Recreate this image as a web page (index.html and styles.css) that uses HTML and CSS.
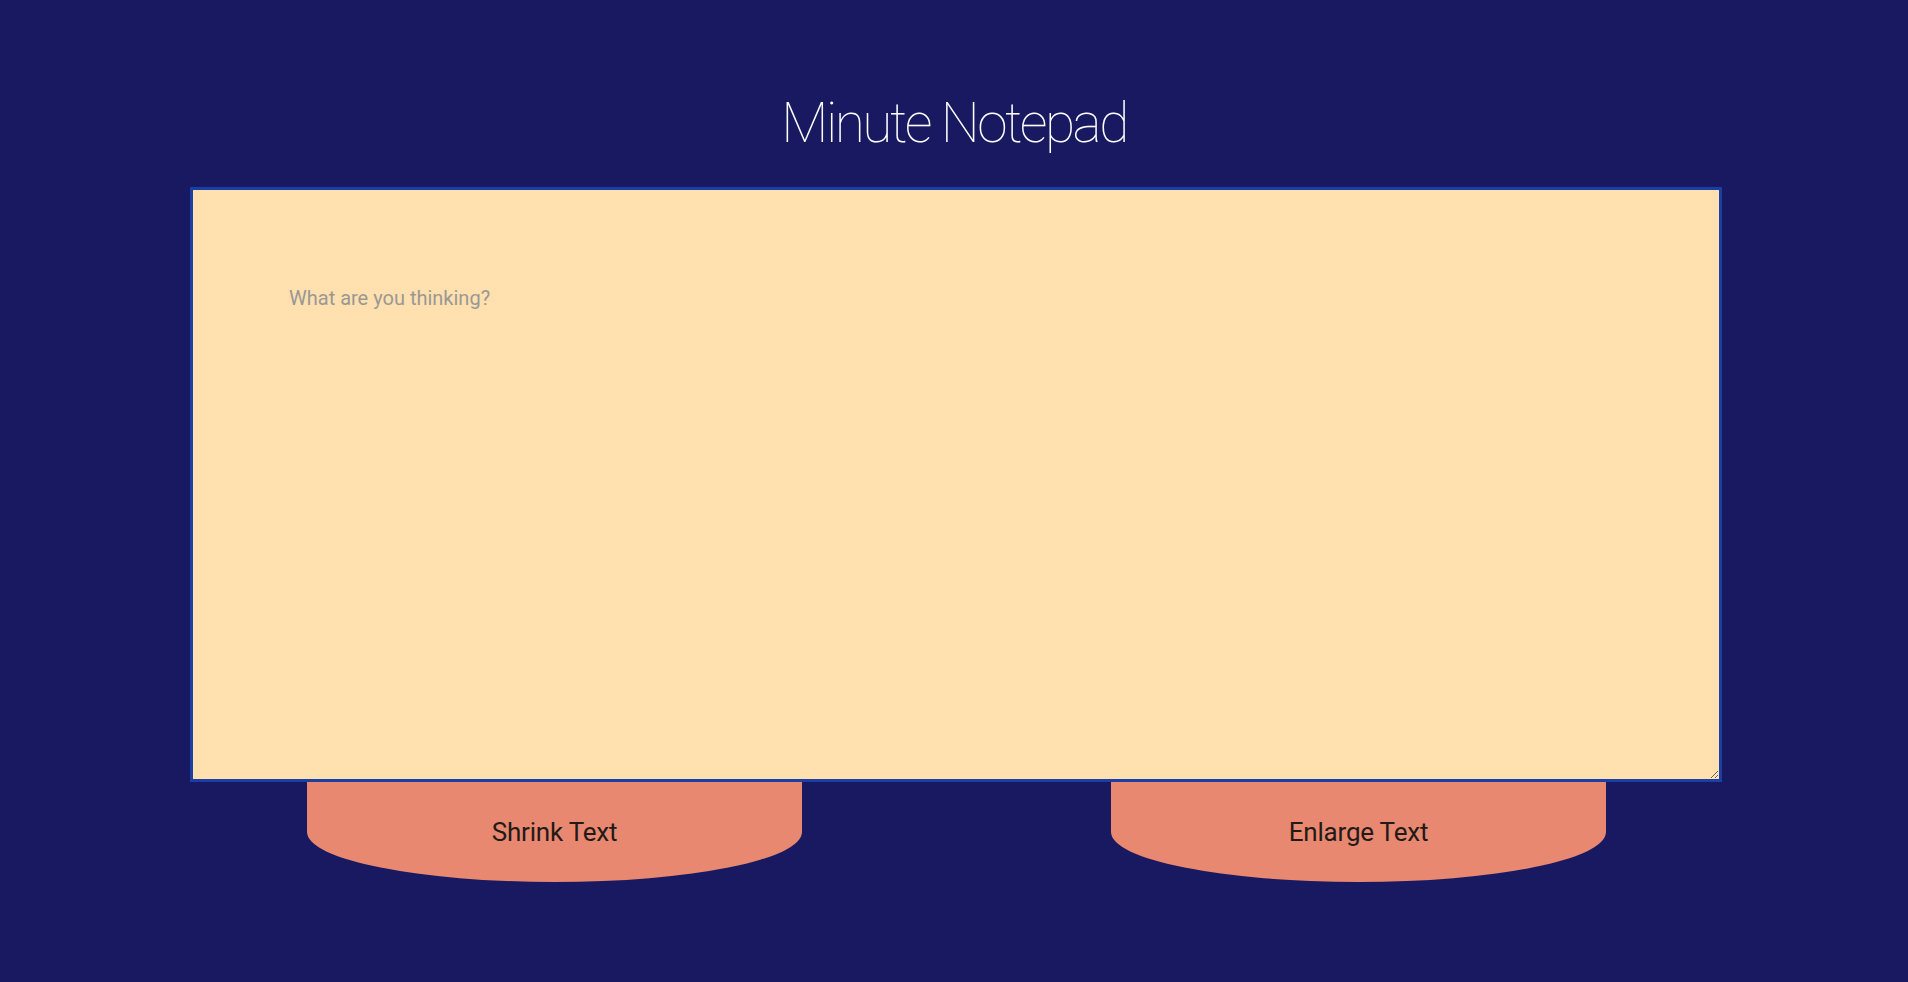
FILE: index.html
```html
<!DOCTYPE html>
<html lang="en">
<head>
<meta charset="utf-8">
<title>Minute Notepad</title>
<link rel="stylesheet" href="styles.css">
</head>
<body>
<main class="page">
  <h1 class="title">Minute Notepad</h1>
  <textarea class="pad" placeholder="What are you thinking?" autofocus></textarea>
  <div class="controls">
    <button class="btn" type="button">Shrink Text</button>
    <button class="btn" type="button">Enlarge Text</button>
  </div>
</main>
</body>
</html>
```
FILE: styles.css
```css
html, body {
  margin: 0;
  padding: 0;
  background: #191962;
}
.page {
  display: flex;
  flex-direction: column;
  min-height: 982px;
}
.title {
  margin: 96px 0 36px;
  font-family: Roboto, "Liberation Sans", sans-serif;
  font-weight: 100;
  font-size: 55px;
  line-height: 55px;
  letter-spacing: -2.5px;
  color: #ffffff;
  text-align: center;
}
.pad {
  display: block;
  box-sizing: border-box;
  width: 1532px;
  height: 595px;
  margin: 0 0 0 190px;
  padding: 96px;
  border: 3px solid #1b3fa6;
  outline: none;
  background: #ffe0ae;
  font-family: Roboto, "Liberation Sans", sans-serif;
  font-size: 20px;
  line-height: 24px;
  color: #222;
  caret-color: #000;
}
.pad::placeholder {
  color: #9a9894;
}
.controls {
  display: flex;
  gap: 309px;
  padding-left: 307px;
}
.btn {
  flex: 0 0 495px;
  width: 495px;
  height: 100px;
  border: none;
  border-radius: 0 0 50% 50%;
  background: #e88870;
  font-family: Roboto, "Liberation Sans", sans-serif;
  font-size: 26px;
  letter-spacing: -0.2px;
  color: #231a17;
  padding: 0;
  cursor: pointer;
}
```
